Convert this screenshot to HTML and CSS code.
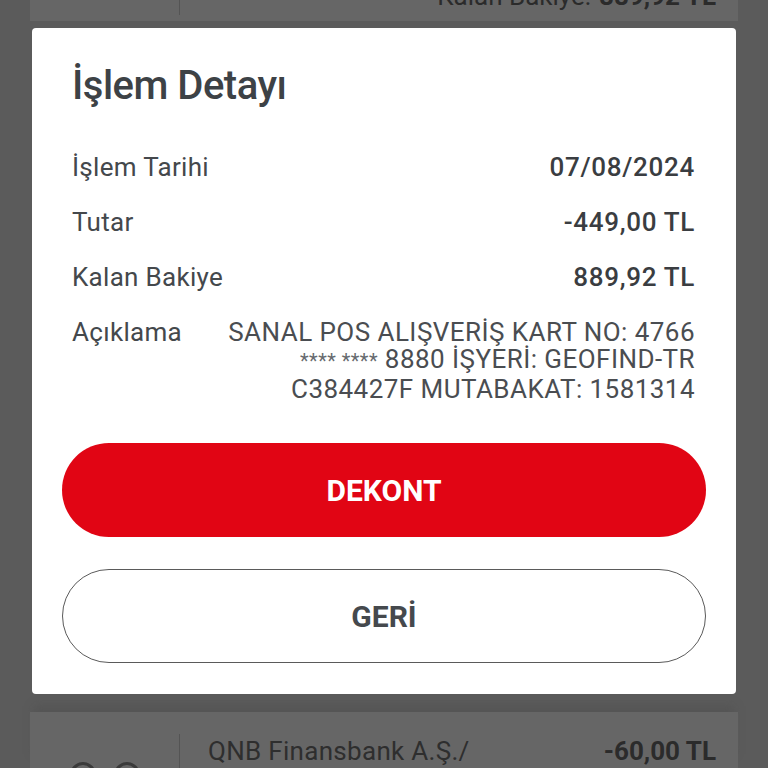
FILE: index.html
```html
<!DOCTYPE html>
<html lang="tr">

<head>
    <meta charset="UTF-8">
    <meta name="viewport" content="width=device-width, initial-scale=1.0">
    <title>İşlem Detayı</title>
    <link rel="stylesheet" href="styles.css">
</head>

<body>

    <div class="screen">

        <!-- list behind the dialog, dimmed -->
        <div class="list-card top-card">
            <div class="card-side"></div>
            <div class="card-body">
                <span class="card-label">Kalan Bakiye:</span>
                <span class="card-amount">889,92 TL</span>
            </div>
        </div>

        <div class="dialog">
            <h1 class="dialog-title">İşlem Detayı</h1>

            <div class="detail-rows">
                <div class="detail-row">
                    <span class="detail-label">İşlem Tarihi</span>
                    <span class="detail-value">07/08/2024</span>
                </div>
                <div class="detail-row">
                    <span class="detail-label">Tutar</span>
                    <span class="detail-value">-449,00 TL</span>
                </div>
                <div class="detail-row">
                    <span class="detail-label">Kalan Bakiye</span>
                    <span class="detail-value">889,92 TL</span>
                </div>
                <div class="detail-row">
                    <span class="detail-label">Açıklama</span>
                    <span class="detail-desc">SANAL POS ALIŞVERİŞ KART NO: 4766<br>
                        <span class="stars">**** ****</span> 8880 İŞYERİ: GEOFIND-TR<br>
                        C384427F MUTABAKAT: 1581314</span>
                </div>
            </div>

            <div class="dialog-buttons">
                <button class="btn btn-red">DEKONT</button>
                <button class="btn btn-outline">GERİ</button>
            </div>
        </div>

        <div class="list-card bottom-card">
            <div class="card-side">
                <span class="dot"></span>
                <span class="dot"></span>
            </div>
            <div class="card-body">
                <span class="card-name">QNB Finansbank A.Ş./</span>
                <span class="card-amount">-60,00 TL</span>
            </div>
        </div>

    </div>

</body>

</html>
```

FILE: styles.css
```css
* {
    margin: 0;
    padding: 0;
    box-sizing: border-box;
}

body {
    background-color: #5b5b5b;
    font-family: Roboto, "Open Sans", sans-serif;
    overflow: hidden;
}

.screen {
    height: 768px;
    display: flex;
    flex-direction: column;
    align-items: flex-start;
}

/* dimmed cards of the list behind */
.list-card {
    width: 708px;
    margin-left: 30px;
    background-color: #666666;
    display: flex;
    color: #2b2b2b;
    font-size: 26px;
}

.card-side {
    width: 150px;
    border-right: 1px solid #545454;
    display: flex;
    align-items: flex-end;
    justify-content: center;
    gap: 18px;
}

.card-body {
    flex: 1;
    display: flex;
    justify-content: flex-end;
    align-items: baseline;
    padding: 0 22px 0 28px;
}

.top-card {
    height: 22px;
    overflow: hidden;
}

.top-card .card-side {
    height: 15px;
}

.top-card .card-body {
    margin-top: -19px;
    line-height: 30px;
}

.card-label {
    margin-right: 8px;
}

.card-amount {
    font-weight: 700;
}

.bottom-card {
    margin-top: 18px;
    height: 60px;
    box-shadow: 0 -10px 8px -4px #555555;
}

.bottom-card .card-side {
    margin-top: 22px;
    overflow: hidden;
}

.bottom-card .card-body {
    justify-content: space-between;
    padding-top: 24px;
    line-height: 30px;
}

.card-name {
    color: #2e2e2e;
    letter-spacing: 0.3px;
}

.dot {
    width: 26px;
    height: 26px;
    border: 3px solid #3a3a3a;
    border-radius: 50%;
    margin-bottom: -20px;
}

/* dialog */
.dialog {
    width: 704px;
    margin: 7px 0 0 32px;
    background-color: #ffffff;
    border-radius: 4px;
    padding: 34px 30px 31px;
    color: #3c4044;
}

.dialog-title {
    font-size: 40px;
    font-weight: 500;
    line-height: 48px;
    padding-left: 10px;
    letter-spacing: -0.5px;
    color: #3d4246;
}

.detail-rows {
    margin-top: 44px;
    padding: 0 11px 0 10px;
    display: flex;
    flex-direction: column;
    gap: 27.5px;
    font-size: 26px;
    line-height: 27.5px;
}

.detail-row {
    display: flex;
    justify-content: space-between;
}

.detail-label {
    color: #44484c;
    letter-spacing: 0.3px;
}

.detail-value {
    font-weight: 500;
    letter-spacing: 0.7px;
    color: #3a3d41;
}

.detail-desc {
    text-align: right;
    color: #4a4d51;
    letter-spacing: 0.45px;
    margin-left: 40px;
}

.stars {
    font-size: 20px;
    color: #666a6e;
}

.dialog-buttons {
    margin-top: 40px;
    display: flex;
    flex-direction: column;
    gap: 32px;
}

.btn {
    height: 94px;
    border-radius: 47px;
    font-family: Roboto, sans-serif;
    font-size: 30px;
    font-weight: 700;
    cursor: pointer;
}

.btn-red {
    background-color: #e10514;
    color: #ffffff;
    border: none;
}

.btn-outline {
    background-color: #ffffff;
    color: #45494d;
    border: 1.5px solid #5a5a5a;
}
```
